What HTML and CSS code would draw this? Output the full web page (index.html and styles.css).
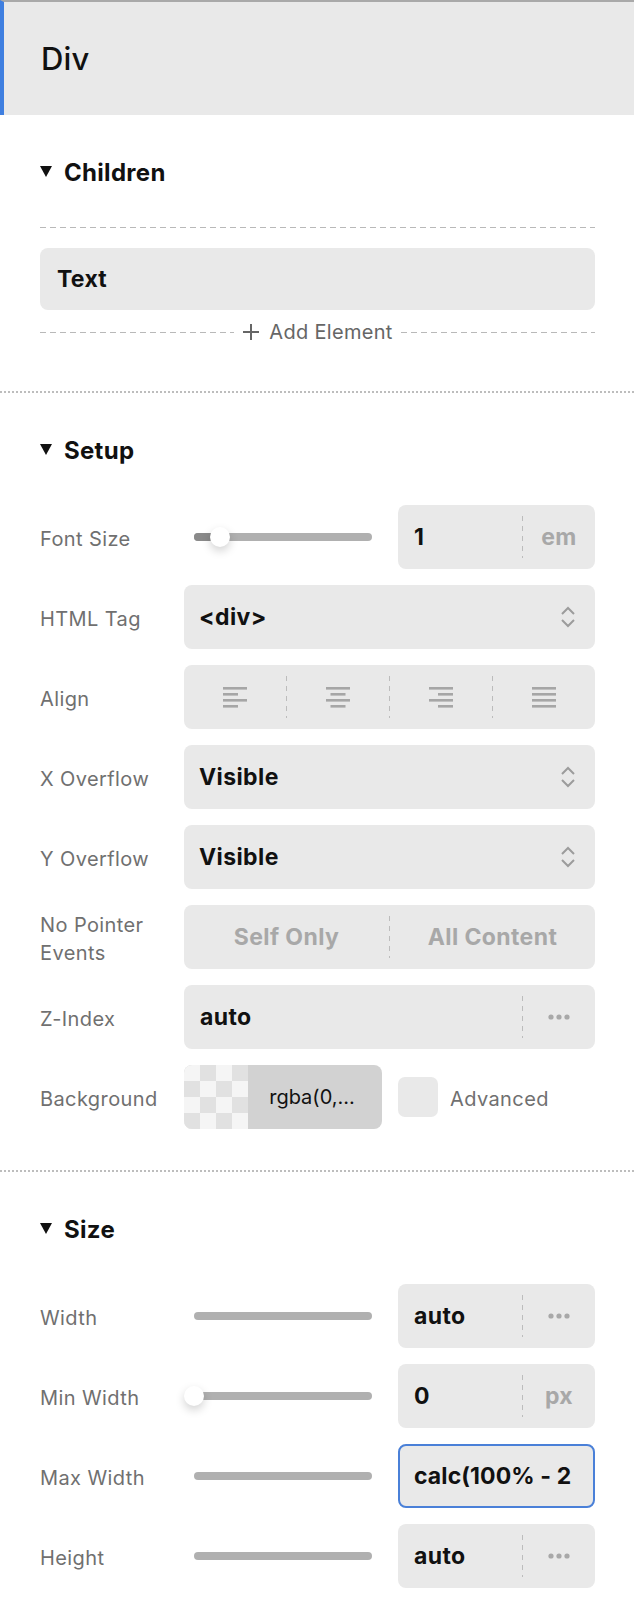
FILE: index.html
```html
<!DOCTYPE html>
<html>
<head>
<meta charset="utf-8">
<link rel="stylesheet" href="styles.css">
</head>
<body>
<div class="panel">
  <header class="title">Div</header>

  <section class="sec sec-children">
    <h2 class="sec-head"><span class="tri"></span>Children</h2>
    <div class="dash-line"></div>
    <div class="child-item">Text</div>
    <div class="add-row">
      <span class="dash-line grow"></span>
      <span class="add-btn">
        <svg class="plus" width="18" height="18" viewBox="0 0 18 18"><path d="M9 1v16M1 9h16" stroke="#666" stroke-width="2" fill="none"/></svg>
        Add Element
      </span>
      <span class="dash-line grow"></span>
    </div>
  </section>

  <section class="sec">
    <h2 class="sec-head"><span class="tri"></span>Setup</h2>
    <div class="rows">
      <div class="row">
        <div class="label">Font Size</div>
        <div class="ctrl split">
          <div class="slider"><div class="track"><div class="fill fill-small"></div><div class="thumb thumb-small"></div></div></div>
          <div class="box num"><span class="val">1</span><span class="vsep"></span><span class="unit">em</span></div>
        </div>
      </div>
      <div class="row">
        <div class="label">HTML Tag</div>
        <div class="ctrl box select"><span class="val">&lt;div&gt;</span>
          <svg class="chev" width="16" height="24" viewBox="0 0 16 24"><path d="M2 9l6-6 6 6M2 15l6 6 6-6" stroke="#9c9c9c" stroke-width="2" fill="none"/></svg>
        </div>
      </div>
      <div class="row">
        <div class="label">Align</div>
        <div class="ctrl box seg">
          <div class="seg-item"><svg width="24" height="21" viewBox="0 0 24 21"><rect x="0" y="0" width="24" height="2.6"/><rect x="0" y="6" width="15" height="2.6"/><rect x="0" y="12" width="24" height="2.6"/><rect x="0" y="18" width="15" height="2.6"/></svg></div>
          <span class="vsep"></span>
          <div class="seg-item"><svg width="24" height="21" viewBox="0 0 24 21"><rect x="0" y="0" width="24" height="2.6"/><rect x="4.5" y="6" width="15" height="2.6"/><rect x="0" y="12" width="24" height="2.6"/><rect x="4.5" y="18" width="15" height="2.6"/></svg></div>
          <span class="vsep"></span>
          <div class="seg-item"><svg width="24" height="21" viewBox="0 0 24 21"><rect x="0" y="0" width="24" height="2.6"/><rect x="9" y="6" width="15" height="2.6"/><rect x="0" y="12" width="24" height="2.6"/><rect x="9" y="18" width="15" height="2.6"/></svg></div>
          <span class="vsep"></span>
          <div class="seg-item"><svg width="24" height="21" viewBox="0 0 24 21"><rect x="0" y="0" width="24" height="2.6"/><rect x="0" y="6" width="24" height="2.6"/><rect x="0" y="12" width="24" height="2.6"/><rect x="0" y="18" width="24" height="2.6"/></svg></div>
        </div>
      </div>
      <div class="row">
        <div class="label">X Overflow</div>
        <div class="ctrl box select"><span class="val">Visible</span>
          <svg class="chev" width="16" height="24" viewBox="0 0 16 24"><path d="M2 9l6-6 6 6M2 15l6 6 6-6" stroke="#9c9c9c" stroke-width="2" fill="none"/></svg>
        </div>
      </div>
      <div class="row">
        <div class="label">Y Overflow</div>
        <div class="ctrl box select"><span class="val">Visible</span>
          <svg class="chev" width="16" height="24" viewBox="0 0 16 24"><path d="M2 9l6-6 6 6M2 15l6 6 6-6" stroke="#9c9c9c" stroke-width="2" fill="none"/></svg>
        </div>
      </div>
      <div class="row">
        <div class="label label-wrap">No Pointer Events</div>
        <div class="ctrl box seg">
          <div class="seg-item seg-text">Self Only</div>
          <span class="vsep"></span>
          <div class="seg-item seg-text">All Content</div>
        </div>
      </div>
      <div class="row">
        <div class="label">Z-Index</div>
        <div class="ctrl box num"><span class="val">auto</span><span class="vsep"></span>
          <span class="unit"><svg width="24" height="6" viewBox="0 0 24 6"><circle cx="4" cy="3" r="2.6"/><circle cx="12" cy="3" r="2.6"/><circle cx="20" cy="3" r="2.6"/></svg></span>
        </div>
      </div>
      <div class="row">
        <div class="label">Background</div>
        <div class="ctrl bg-ctrl">
          <div class="swatch"><div class="checker"></div><div class="swatch-val">rgba(0,...</div></div>
          <span class="checkbox"></span>
          <span class="adv">Advanced</span>
        </div>
      </div>
    </div>
  </section>

  <section class="sec">
    <h2 class="sec-head"><span class="tri"></span>Size</h2>
    <div class="rows">
      <div class="row">
        <div class="label">Width</div>
        <div class="ctrl split">
          <div class="slider"><div class="track"></div></div>
          <div class="box num"><span class="val">auto</span><span class="vsep"></span>
            <span class="unit"><svg width="24" height="6" viewBox="0 0 24 6"><circle cx="4" cy="3" r="2.6"/><circle cx="12" cy="3" r="2.6"/><circle cx="20" cy="3" r="2.6"/></svg></span>
          </div>
        </div>
      </div>
      <div class="row">
        <div class="label">Min Width</div>
        <div class="ctrl split">
          <div class="slider"><div class="track"><div class="thumb thumb-min"></div></div></div>
          <div class="box num"><span class="val">0</span><span class="vsep"></span><span class="unit">px</span></div>
        </div>
      </div>
      <div class="row">
        <div class="label">Max Width</div>
        <div class="ctrl split">
          <div class="slider"><div class="track"></div></div>
          <div class="box num focus"><span class="val tight">calc(100% - 2</span></div>
        </div>
      </div>
      <div class="row">
        <div class="label">Height</div>
        <div class="ctrl split">
          <div class="slider"><div class="track"></div></div>
          <div class="box num"><span class="val">auto</span><span class="vsep"></span>
            <span class="unit"><svg width="24" height="6" viewBox="0 0 24 6"><circle cx="4" cy="3" r="2.6"/><circle cx="12" cy="3" r="2.6"/><circle cx="20" cy="3" r="2.6"/></svg></span>
          </div>
        </div>
      </div>
    </div>
  </section>
</div>
</body>
</html>
```

FILE: styles.css
```css
* { box-sizing: border-box; }
html, body { margin: 0; padding: 0; background: #fff; }
body {
  font-family: "Inter", "Roboto", "Liberation Sans", sans-serif;
  color: #111;
  width: 634px;
}
.panel { width: 634px; }

.title {
  height: 115px;
  border-top: 2px solid #a9a9a9;
  border-left: 4px solid #3f7fe0;
  background: #e9e9e9;
  display: flex;
  align-items: center;
  padding-left: 37px;
  font-size: 31px;
  font-weight: 500;
  letter-spacing: 0.2px;
}

.sec {
  padding: 40px 39px 41px 40px;
  border-bottom: 2px dotted #bdbdbd;
}
.sec:last-child { border-bottom: none; }
.sec-children { padding-bottom: 47px; }

.sec-head {
  margin: 0;
  height: 32px;
  display: flex;
  align-items: center;
  font-size: 24px;
  font-weight: 700;
  letter-spacing: 0.3px;
  gap: 12px;
  padding-top: 2px;
}
.tri {
  width: 0; height: 0;
  border-left: 6.5px solid transparent;
  border-right: 6.5px solid transparent;
  border-top: 11px solid #111;
  margin-top: -2px;
}

.dash-line {
  display: block;
  height: 1px;
  margin-top: 40px;
  background: repeating-linear-gradient(to right, #b9b9b9 0 6px, transparent 6px 10px);
}
.child-item {
  margin-top: 20px;
  height: 62px;
  background: #e9e9e9;
  border-radius: 8px;
  display: flex;
  align-items: center;
  padding-left: 17px;
  font-size: 23px;
  font-weight: 700;
  letter-spacing: 0.3px;
}
.add-row {
  display: flex;
  align-items: center;
  height: 24px;
  margin-top: 10px;
}
.add-row .grow { flex: 1; margin-top: 0; }
.add-btn {
  display: flex;
  align-items: center;
  gap: 9px;
  padding: 0 8px;
  color: #666;
  font-size: 20px;
  letter-spacing: 0.3px;
}

.rows {
  margin-top: 40px;
  display: flex;
  flex-direction: column;
  gap: 16px;
}
.row {
  display: grid;
  grid-template-columns: 144px 1fr;
  align-items: center;
  height: 64px;
}
.label {
  color: #707070;
  font-size: 20px;
  letter-spacing: 0.4px;
  line-height: 28px;
  padding-top: 4px;
}
.label-wrap { width: 140px; }

.ctrl { height: 64px; min-width: 0; }
.box {
  background: #e9e9e9;
  border-radius: 8px;
  height: 64px;
}
.val {
  font-size: 23px;
  font-weight: 700;
  letter-spacing: 0.4px;
  color: #111;
}

.split { display: flex; align-items: center; }
.slider {
  width: 214px;
  flex: none;
  padding: 0 26px 0 10px;
}
.track {
  position: relative;
  height: 8px;
  border-radius: 4px;
  background: #b0b0b0;
}
.fill {
  position: absolute;
  left: 0; top: 0; bottom: 0;
  border-radius: 4px 0 0 4px;
  background: #8a8a8a;
}
.fill-small { width: 26px; }
.thumb {
  position: absolute;
  top: -6px;
  width: 20px; height: 20px;
  border-radius: 50%;
  background: #fff;
  box-shadow: 0 4px 10px rgba(0,0,0,0.18);
}
.thumb-small { left: 16px; }
.thumb-min { left: -10px; }

.num {
  flex: 1;
  min-width: 0;
  display: flex;
  align-items: center;
  padding-left: 16px;
}
.num .val { flex: 1; }
.vsep {
  align-self: center;
  width: 1px;
  height: 42px;
  background: repeating-linear-gradient(to bottom, #bcbcbc 0 5px, transparent 5px 10px);
}
.unit {
  width: 72px;
  display: flex;
  justify-content: center;
  align-items: center;
  color: #a8a8a8;
  font-size: 23px;
  font-weight: 700;
  letter-spacing: 0.3px;
}
.unit svg { fill: #a8a8a8; }

.focus {
  border: 2px solid #4a80d8;
  padding: 0 4px 0 14px;
}
.tight { white-space: nowrap; letter-spacing: 0.1px; }

.select {
  display: flex;
  align-items: center;
  justify-content: space-between;
  padding: 0 19px 0 15px;
}

.seg {
  display: flex;
  align-items: center;
}
.seg-item {
  flex: 1;
  display: flex;
  justify-content: center;
  align-items: center;
  height: 100%;
}
.seg-item svg { fill: #a6a6a6; }
.seg-text {
  color: #a8a8a8;
  font-size: 23px;
  font-weight: 700;
  letter-spacing: 0.4px;
}

.bg-ctrl {
  display: flex;
  align-items: center;
}
.swatch {
  width: 198px;
  height: 64px;
  border-radius: 8px;
  overflow: hidden;
  display: flex;
  background: #d2d2d2;
}
.checker {
  width: 64px;
  height: 64px;
  background-color: #f5f5f5;
  background-image:
    linear-gradient(45deg, #e1e1e1 25%, transparent 25%, transparent 75%, #e1e1e1 75%),
    linear-gradient(45deg, #e1e1e1 25%, transparent 25%, transparent 75%, #e1e1e1 75%);
  background-size: 32px 32px;
  background-position: 0 0, 16px 16px;
}
.swatch-val {
  flex: 1;
  display: flex;
  align-items: center;
  justify-content: center;
  font-size: 20px;
  color: #111;
  padding-right: 6px;
}
.checkbox {
  width: 40px;
  height: 40px;
  margin-left: 16px;
  border-radius: 7px;
  background: #e9e9e9;
}
.adv {
  margin-left: 12px;
  color: #707070;
  font-size: 20px;
  letter-spacing: 0.4px;
  padding-top: 3px;
}
```
